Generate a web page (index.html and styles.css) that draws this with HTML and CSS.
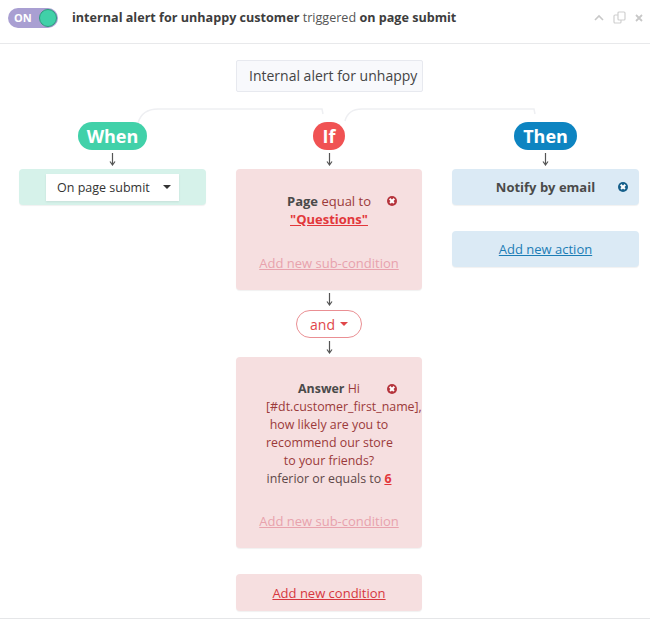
FILE: index.html
```html
<!DOCTYPE html>
<html>
<head>
<meta charset="utf-8">
<link rel="stylesheet" href="styles.css">
</head>
<body>
<div class="panel">
  <header class="top">
    <div class="toggle"><span class="on">ON</span><span class="knob"></span></div>
    <div class="title"><b>internal alert for unhappy customer</b> triggered <b>on page submit</b></div>
    <div class="tools">
      <svg width="12" height="12" viewBox="0 0 12 12"><path d="M2 8 L6 4 L10 8" fill="none" stroke="#c8c8c8" stroke-width="1.6"/></svg>
      <svg width="13" height="14" viewBox="0 0 13 14"><rect x="1" y="4" width="7" height="8" rx="1" fill="none" stroke="#d0d0d0" stroke-width="1.2"/><rect x="5" y="1" width="7" height="8" rx="1" fill="#fff" stroke="#d0d0d0" stroke-width="1.2"/></svg>
      <svg width="10" height="10" viewBox="0 0 10 10"><path d="M2 2 L8 8 M8 2 L2 8" stroke="#c8c8c8" stroke-width="1.8"/></svg>
    </div>
  </header>
  <div class="body">
    <div class="namebox">Internal alert for unhappy</div>
    <svg class="links" width="650" height="30" viewBox="0 0 650 30">
      <path d="M138 22 Q142 8 158 8 L322 8 L323 13" fill="none" stroke="#eeeff2" stroke-width="1.5"/>
      <path d="M345 20 Q348 8 362 8 L534 8 L535 13" fill="none" stroke="#eeeff2" stroke-width="1.5"/>
    </svg>
    <div class="cols">
      <div class="col">
        <div class="pill when">When</div>
        <div class="arrow"><svg width="7" height="13" viewBox="0 0 7 13"><path d="M3.5 0 V11 M1 8.5 L3.5 12 L6 8.5" fill="none" stroke="#555" stroke-width="1.2"/></svg></div>
        <div class="card green">
          <div class="select">On page submit <span class="caret"></span></div>
        </div>
      </div>
      <div class="col">
        <div class="pill ifp">If</div>
        <div class="arrow"><svg width="7" height="13" viewBox="0 0 7 13"><path d="M3.5 0 V11 M1 8.5 L3.5 12 L6 8.5" fill="none" stroke="#555" stroke-width="1.2"/></svg></div>
        <div class="card pink cond">
          <div class="rule"><span class="dark">Page</span> equal to<br><a class="val">"Questions"</a></div>
          <span class="x red-x"></span>
          <a class="sub">Add new sub-condition</a>
        </div>
        <div class="arrow mid"><svg width="7" height="13" viewBox="0 0 7 13"><path d="M3.5 0 V11 M1 8.5 L3.5 12 L6 8.5" fill="none" stroke="#555" stroke-width="1.2"/></svg></div>
        <div class="andp">and <span class="caret red"></span></div>
        <div class="arrow mid2"><svg width="7" height="13" viewBox="0 0 7 13"><path d="M3.5 0 V11 M1 8.5 L3.5 12 L6 8.5" fill="none" stroke="#555" stroke-width="1.2"/></svg></div>
        <div class="card pink cond tall">
          <div class="rule narrow"><span class="dark">Answer</span> Hi<br>[#dt.customer_first_name],<br>how likely are you to<br>recommend our store<br>to your friends?<br><span class="grey">inferior or equals to</span> <a class="val">6</a></div>
          <span class="x red-x"></span>
          <a class="sub">Add new sub-condition</a>
        </div>
        <div class="card pink addc"><a class="addcond">Add new condition</a></div>
      </div>
      <div class="col">
        <div class="pill then">Then</div>
        <div class="arrow"><svg width="7" height="13" viewBox="0 0 7 13"><path d="M3.5 0 V11 M1 8.5 L3.5 12 L6 8.5" fill="none" stroke="#555" stroke-width="1.2"/></svg></div>
        <div class="card blue notify"><span>Notify by email</span><span class="x blue-x"></span></div>
        <div class="card blue addact"><a>Add new action</a></div>
      </div>
    </div>
  </div>
</div>
</body>
</html>
```
FILE: styles.css
```css
* { box-sizing: border-box; }
body {
  margin: 0;
  font-family: "Open Sans", "Noto Sans", sans-serif;
  font-size: 13px;
  color: #444;
  background: #fff;
}
.panel { width: 650px; height: 619px; border-bottom: 1px solid #e5e6e8; overflow: hidden; }
.top {
  height: 44px;
  border-bottom: 1px solid #e8e9eb;
  display: flex;
  align-items: center;
  padding: 0 6px 0 8px;
}
.toggle {
  width: 50px; height: 20px;
  background: #a99fd2;
  border-radius: 10px;
  display: flex; align-items: center; justify-content: space-between;
  padding: 0 1px 0 6px;
  margin-top: -8px;
}
.on { color: #fff; font-weight: 700; font-size: 11px; }
.knob {
  width: 18px; height: 18px; border-radius: 50%;
  background: #40d0a8; border: 1.5px solid #2c9a7c;
}
.title { margin-left: 14px; font-size: 12.6px; color: #555; margin-top: -8px; }
.title b { color: #3d3d3d; }
.tools { margin-left: auto; display: flex; align-items: center; gap: 8px; margin-top: -8px; }
.body { position: relative; padding-top: 16px; }
.namebox {
  width: 187px; height: 32px;
  margin-left: 236px;
  background: #f8f9fc;
  border: 1px solid #e7e9ef;
  border-radius: 2px;
  font-size: 14px; color: #444;
  padding: 5px 0 0 12px;
  white-space: nowrap; overflow: hidden;
}
.links { position: absolute; left: 0; top: 57px; }
.cols {
  position: relative; z-index: 1;
  display: grid;
  grid-template-columns: 187px 186px 187px;
  column-gap: 30px;
  padding-left: 19px;
  margin-top: 30px;
}
.col { display: flex; flex-direction: column; align-items: center; }
.pill {
  height: 28px; border-radius: 14px;
  color: #fff; font-weight: 700; font-size: 18px;
  line-height: 28px; padding: 0 9px;
}
.when { background: #41d1a9; }
.ifp { background: #f05253; padding: 0 9px; min-width: 32px; text-align: center; }
.then { background: #0d84c1; }
.arrow { height: 19px; display: flex; justify-content: center; padding-top: 3px; }
.arrow.mid { height: 20px; padding-top: 3px; }
.arrow.mid2 { height: 19px; padding-top: 3px; }
.card { position: relative; width: 100%; border-radius: 4px; box-shadow: 0 1px 1px rgba(0,0,0,0.06); }
.green { background: #d6f2ea; height: 36px; display: flex; align-items: center; justify-content: center; }
.select {
  background: #fff; width: 133px; height: 27px;
  display: flex; align-items: center; padding-left: 11px;
  font-size: 12.5px; color: #333;
  box-shadow: 0 1px 2px rgba(0,0,0,0.08);
}
.caret {
  display: inline-block; width: 0; height: 0;
  border-left: 4px solid transparent; border-right: 4px solid transparent;
  border-top: 4px solid #333; margin-left: 13px;
}
.caret.red { border-top-color: #e0474a; margin-left: 5px; vertical-align: 2px; }
.pink { background: #f6dfe0; }
.cond { display: flex; flex-direction: column; align-items: center; padding-top: 23px; height: 121px; }
.cond.tall { height: 191px; padding-top: 23px; }
.rule {
  text-align: center; line-height: 18px;
  color: #9b3a3a; font-size: 13px;
}
.rule.narrow { width: 126px; font-size: 12.4px; white-space: nowrap; }
.dark { color: #4a4a4a; font-weight: 700; }
.grey { color: #5e4848; }
.val { color: #e2373b; font-weight: 700; text-decoration: underline; }
.x {
  position: absolute; width: 10px; height: 10px; border-radius: 50%;
  top: 27px; right: 25px;
}
.x::before, .x::after {
  content: ""; position: absolute; left: 2px; top: 4.3px; width: 6px; height: 1.5px; background: #fff;
  transform: rotate(45deg);
}
.x::after { transform: rotate(-45deg); }
.red-x { background: #b5343c; }
.sub { margin-top: auto; margin-bottom: 18px; color: #e8a2ad; text-decoration: underline; font-size: 13px; }
.andp {
  border: 1px solid #ea8f93; background: #fff; color: #e0474a;
  border-radius: 14px; height: 28px; width: 66px;
  display: flex; align-items: center; justify-content: center;
  font-size: 14px;
}
.addc { margin-top: 26px; height: 37px; display: flex; align-items: center; justify-content: center; }
.addcond { color: #d7383f; text-decoration: underline; }
.blue { background: #dbeaf5; }
.notify { height: 36px; display: flex; align-items: center; justify-content: center; position: relative; font-weight: 700; color: #4a4a4a; }
.notify .x { top: 13px; right: 11px; }
.blue-x { background: #155f8a; }
.addact { margin-top: 26px; height: 36px; display: flex; align-items: center; justify-content: center; }
.addact a { color: #1b7db5; text-decoration: underline; }
```
